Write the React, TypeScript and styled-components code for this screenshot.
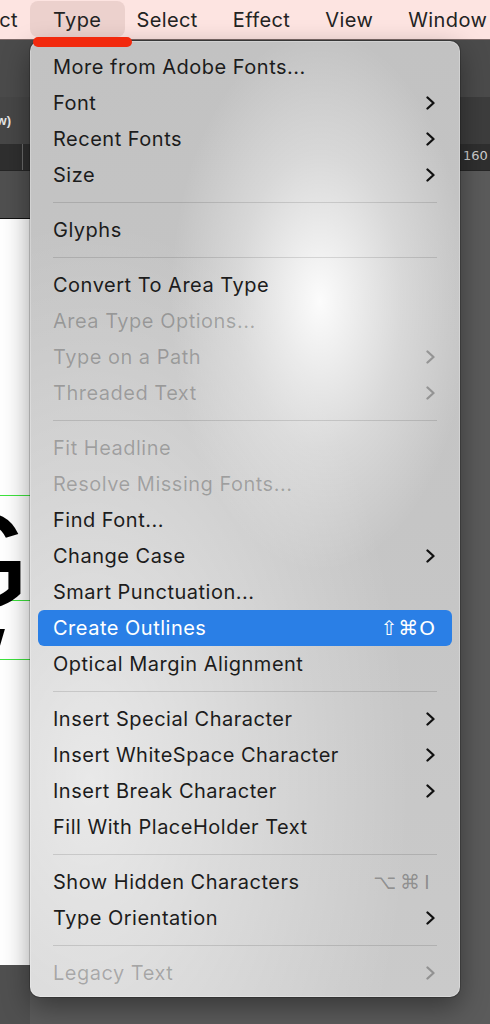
import React from 'react'
import styled, { createGlobalStyle } from 'styled-components'

const GlobalStyle = createGlobalStyle`
  html, body {
    margin: 0;
    padding: 0;
    background: #5a5a5a;
  }
  body {
    font-family: Inter, "Noto Sans", "DejaVu Sans", sans-serif;
    -webkit-font-smoothing: antialiased;
  }
`

const Screen = styled.div`
  position: relative;
  width: 490px;
  height: 1024px;
  overflow: hidden;
  display: flex;
  flex-direction: column;
  background: #5a5a5a;
`

const MenuBar = styled.div`
  height: 39px;
  flex-shrink: 0;
  border-bottom: 1px solid #7d6a68;
  background: #fde4e1;
  display: flex;
  align-items: stretch;
  gap: 35px;
  font-size: 20px;
  letter-spacing: 0.4px;
  color: #232323;
  white-space: nowrap;
`

const MenuTitle = styled.div<{ $active?: boolean; $cut?: boolean }>`
  position: relative;
  display: flex;
  align-items: center;
  justify-content: flex-end;
  width: ${({ $cut }) => ($cut ? '18px' : 'auto')};
  overflow: ${({ $cut }) => ($cut ? 'hidden' : 'visible')};

  &::before {
    content: '';
    display: ${({ $active }) => ($active ? 'block' : 'none')};
    position: absolute;
    top: 1px;
    bottom: 2px;
    left: -23px;
    right: -24px;
    border-radius: 8px;
    background: #ecd1cd;
  }

  span {
    position: relative;
  }
`

const RedMark = styled.div`
  position: absolute;
  left: 33px;
  top: 37px;
  width: 99px;
  height: 10px;
  border-radius: 5px;
  background: #f2290d;
  z-index: 3;
`

const ControlBar = styled.div`
  height: 57px;
  flex-shrink: 0;
  background: #4b4b4b;
`

const TabBar = styled.div`
  height: 47px;
  flex-shrink: 0;
  display: flex;
  background: #3d3d3d;
`

const ActiveTab = styled.div`
  width: 30px;
  display: flex;
  align-items: center;
  justify-content: flex-end;
  overflow: hidden;
  padding-right: 19px;
  box-sizing: border-box;
  background: #474747;
  color: #e6e6e6;
  font-family: "Liberation Sans", Arial, sans-serif;
  font-size: 13px;
  font-weight: bold;
  white-space: nowrap;
`

const Ruler = styled.div`
  height: 26px;
  flex-shrink: 0;
  display: flex;
  background: #2f2f2f;
  border-bottom: 1px solid #262626;
`

const RulerTick = styled.div`
  width: 22px;
  border-right: 1px solid #6a6a6a;
  flex-shrink: 0;
`

const RulerLabel = styled.div`
  margin-left: auto;
  width: 27px;
  padding-top: 4px;
  box-sizing: border-box;
  overflow: hidden;
  color: #cfcfcf;
  font-family: "DejaVu Sans", sans-serif;
  font-size: 13px;
  white-space: nowrap;
`

const DocArea = styled.div`
  flex: 1;
  display: flex;
  background: #5b5b5b;
`

const DocColumn = styled.div`
  width: 30px;
  display: flex;
  flex-direction: column;
  background: #505050;
`

const Pasteboard = styled.div<{ $h: number }>`
  height: ${({ $h }) => $h}px;
  flex-shrink: 0;
`

const Artboard = styled.div`
  position: relative;
  height: 746px;
  flex-shrink: 0;
  background: #ffffff;
  border-top: 1px solid #111;
  overflow: hidden;
`

const Guide = styled.div<{ $y: number }>`
  position: absolute;
  left: 0;
  right: 0;
  top: ${({ $y }) => $y}px;
  height: 1px;
  background: #3ee33e;
`

const BigGlyph = styled.div<{ $x: number; $y: number; $size: number }>`
  position: absolute;
  left: ${({ $x }) => $x}px;
  top: ${({ $y }) => $y}px;
  font-family: "Liberation Sans", Arial, sans-serif;
  font-size: ${({ $size }) => $size}px;
  line-height: 1;
  color: #000;
`

const Menu = styled.div`
  position: absolute;
  left: 30px;
  top: 41px;
  width: 430px;
  height: 956px;
  box-sizing: border-box;
  padding-top: 8px;
  border-radius: 10px;
  z-index: 2;
  background:
    radial-gradient(ellipse 150px 270px at 290px 260px, rgba(255, 255, 255, 0.95), rgba(255, 255, 255, 0.35) 55%, rgba(255, 255, 255, 0) 100%),
    radial-gradient(ellipse 320px 560px at 60px 740px, rgba(255, 255, 255, 0.6), rgba(255, 255, 255, 0) 100%),
    linear-gradient(180deg, #c2c2c2 0%, #c5c5c5 50%, #cacaca 100%);
  box-shadow:
    0 0 0 1px rgba(0, 0, 0, 0.18),
    inset 0 0 0 1px rgba(255, 255, 255, 0.25),
    0 10px 28px rgba(0, 0, 0, 0.4);
`

const Item = styled.div<{ $disabled?: boolean; $active?: boolean }>`
  height: 36px;
  margin: 0 8px;
  padding: 0 16px 0 15px;
  border-radius: 6px;
  display: flex;
  align-items: center;
  font-size: 20px;
  letter-spacing: 0.5px;
  white-space: nowrap;
  color: ${({ $disabled, $active }) =>
    $active ? '#ffffff' : $disabled ? 'rgba(0, 0, 0, 0.25)' : '#1c1c1c'};
  background: ${({ $active }) => ($active ? '#2a7fe6' : 'transparent')};
`

const Trail = styled.div`
  margin-left: auto;
  display: flex;
  align-items: center;
`

const Shortcut = styled.span<{ $disabled?: boolean }>`
  font-family: "DejaVu Sans", Inter, sans-serif;
  font-size: 20px;
  letter-spacing: ${({ $disabled }) => ($disabled ? '4px' : '1px')};
  margin-right: ${({ $disabled }) => ($disabled ? '2px' : '0')};
  color: ${({ $disabled }) => ($disabled ? 'rgba(0, 0, 0, 0.3)' : 'inherit')};
`

const Separator = styled.div`
  height: 1px;
  margin: 9px 23px;
  background: rgba(0, 0, 0, 0.12);
`

const Chevron = ({ dim }: { dim?: boolean }) => (
  <svg width="11" height="14" viewBox="0 0 11 14">
    <polyline
      points="2.5,1.5 8.5,7 2.5,12.5"
      fill="none"
      stroke={dim ? 'rgba(0,0,0,0.28)' : '#111'}
      strokeWidth="2.3"
      strokeLinecap="round"
      strokeLinejoin="round"
    />
  </svg>
)

type Entry =
  | { sep: true }
  | {
      sep?: false
      label: string
      disabled?: boolean
      sub?: boolean
      active?: boolean
      keys?: string
    }

const entries: Entry[] = [
  { label: 'More from Adobe Fonts...' },
  { label: 'Font', sub: true },
  { label: 'Recent Fonts', sub: true },
  { label: 'Size', sub: true },
  { sep: true },
  { label: 'Glyphs' },
  { sep: true },
  { label: 'Convert To Area Type' },
  { label: 'Area Type Options...', disabled: true },
  { label: 'Type on a Path', disabled: true, sub: true },
  { label: 'Threaded Text', disabled: true, sub: true },
  { sep: true },
  { label: 'Fit Headline', disabled: true },
  { label: 'Resolve Missing Fonts...', disabled: true },
  { label: 'Find Font...' },
  { label: 'Change Case', sub: true },
  { label: 'Smart Punctuation...' },
  { label: 'Create Outlines', active: true, keys: '⇧⌘O' },
  { label: 'Optical Margin Alignment' },
  { sep: true },
  { label: 'Insert Special Character', sub: true },
  { label: 'Insert WhiteSpace Character', sub: true },
  { label: 'Insert Break Character', sub: true },
  { label: 'Fill With PlaceHolder Text' },
  { sep: true },
  { label: 'Show Hidden Characters', keys: '⌥⌘I' },
  { label: 'Type Orientation', sub: true },
  { sep: true },
  { label: 'Legacy Text', disabled: true, sub: true },
]

const titles = ['Type', 'Select', 'Effect', 'View', 'Window']

const App = (): JSX.Element => {
  return (
    <Screen>
      <GlobalStyle />
      <MenuBar>
        <MenuTitle $cut>
          <span>Object</span>
        </MenuTitle>
        {titles.map((t) => (
          <MenuTitle key={t} $active={t === 'Type'}>
            <span>{t}</span>
          </MenuTitle>
        ))}
      </MenuBar>
      <RedMark />

      <ControlBar />
      <TabBar>
        <ActiveTab>(RGB/Preview)</ActiveTab>
      </TabBar>
      <Ruler>
        <RulerTick />
        <RulerLabel>160</RulerLabel>
      </Ruler>
      <DocArea>
        <DocColumn>
          <Pasteboard $h={47} />
          <Artboard>
            <Guide $y={276} />
            <Guide $y={381} />
            <Guide $y={440} />
            <BigGlyph $x={-78} $y={272} $size={140}>
              G
            </BigGlyph>
            <BigGlyph $x={-40} $y={390} $size={62}>
              w
            </BigGlyph>
          </Artboard>
          <Pasteboard $h={60} />
        </DocColumn>
      </DocArea>

      <Menu>
        {entries.map((e, i) =>
          e.sep ? (
            <Separator key={i} />
          ) : (
            <Item key={i} $disabled={e.disabled} $active={e.active}>
              {e.label}
              {(e.sub || e.keys) && (
                <Trail>
                  {e.keys && (
                    <Shortcut $disabled={!e.active}>{e.keys}</Shortcut>
                  )}
                  {e.sub && <Chevron dim={e.disabled} />}
                </Trail>
              )}
            </Item>
          )
        )}
      </Menu>
    </Screen>
  )
}

export default App
